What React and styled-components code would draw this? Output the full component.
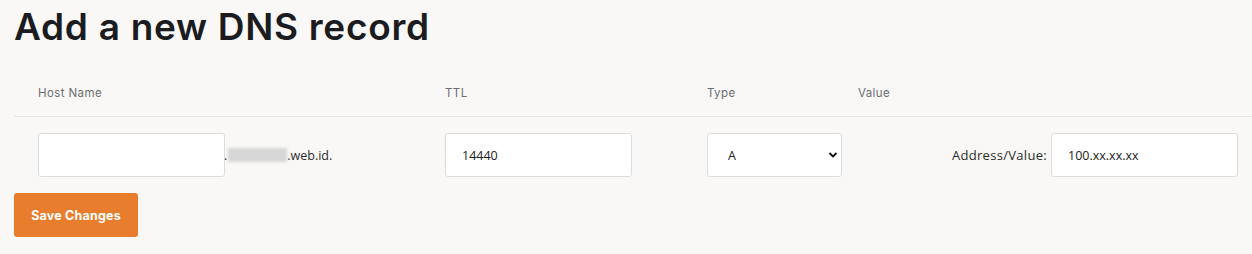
import React from 'react';
import styled, { createGlobalStyle } from 'styled-components';

const GlobalStyle = createGlobalStyle`
  html, body {
    margin: 0;
    padding: 0;
    background: #f9f8f6;
  }
  body {
    font-family: "Open Sans", "Liberation Sans", sans-serif;
    color: #212529;
  }
`;

const Page = styled.div`
  width: 1252px;
  height: 254px;
  box-sizing: border-box;
  padding: 0 0 0 14px;
  background: #f9f8f6;
  overflow: hidden;
`;

const Title = styled.h1`
  margin: 0;
  padding-top: 2px;
  height: 52px;
  font-family: Inter, "Liberation Sans", sans-serif;
  font-size: 37px;
  font-weight: 600;
  letter-spacing: 0.7px;
  line-height: 50px;
  color: #1b1c1f;
`;

const Grid = styled.div`
  display: grid;
  grid-template-columns: 407px 262px 151px 1fr;
  margin-top: 16px;
`;

const HeadCell = styled.div`
  height: 46px;
  display: flex;
  align-items: center;
  padding-left: 24px;
  font-family: Inter, "Liberation Sans", sans-serif;
  font-size: 11.5px;
  letter-spacing: 0.4px;
  color: #6c6e73;
  border-bottom: 1px solid #e3e5e8;
`;

const Cell = styled.div`
  display: flex;
  align-items: center;
  padding: 16px 0 16px 24px;
  font-size: 13px;
  color: #2b2b2b;
  justify-content: ${(p) => (p.$end ? 'flex-end' : 'flex-start')};
  padding-right: ${(p) => (p.$end ? '14px' : '0')};
`;

const Input = styled.input`
  box-sizing: border-box;
  flex-shrink: 0;
  width: 187px;
  height: 44px;
  padding: 0 16px;
  border: 1px solid #dcdcdc;
  border-radius: 3px;
  background: #fff;
  font-family: "Open Sans", "Liberation Sans", sans-serif;
  font-size: 12.5px;
  color: #222;
  outline: none;
`;

const Suffix = styled.span`
  display: flex;
  align-items: center;
  margin-left: -1px;
  font-size: 12.5px;
`;

const Blur = styled.span`
  display: inline-block;
  width: 59px;
  height: 14px;
  margin: 0 0 0 1px;
  background: #d6d6d6;
  filter: blur(1.5px);
`;

const SelectWrap = styled.div`
  position: relative;
  flex-shrink: 0;
  width: 135px;
  height: 44px;
`;

const Select = styled.select`
  appearance: none;
  box-sizing: border-box;
  width: 100%;
  height: 100%;
  padding: 0 0 0 20px;
  border: 1px solid #dcdcdc;
  border-radius: 3px;
  background: #fff;
  font-family: "Open Sans", "Liberation Sans", sans-serif;
  font-size: 12.5px;
  color: #222;
  outline: none;
`;

const Chevron = styled.svg`
  position: absolute;
  right: 4px;
  top: 18px;
  pointer-events: none;
`;

const ValueLabel = styled.span`
  margin-right: 4px;
  font-size: 13px;
  letter-spacing: 0.3px;
  color: #2b2b2b;
`;

const Button = styled.button`
  margin-top: 0;
  width: 124px;
  height: 44px;
  border: none;
  border-radius: 3px;
  background: #e97d2e;
  color: #fff;
  font-family: Inter, "Liberation Sans", sans-serif;
  font-size: 12.5px;
  font-weight: 700;
  letter-spacing: 0.2px;
  cursor: pointer;
`;

export default function App() {
  return (
    <Page>
      <GlobalStyle />
      <Title>Add a new DNS record</Title>
      <Grid>
        <HeadCell>Host Name</HeadCell>
        <HeadCell>TTL</HeadCell>
        <HeadCell>Type</HeadCell>
        <HeadCell>Value</HeadCell>

        <Cell>
          <Input type="text" defaultValue="" />
          <Suffix>
            .<Blur />.web.id.
          </Suffix>
        </Cell>
        <Cell>
          <Input type="text" defaultValue="14440" />
        </Cell>
        <Cell>
          <SelectWrap>
            <Select defaultValue="A">
              <option>A</option>
              <option>AAAA</option>
              <option>CNAME</option>
              <option>MX</option>
              <option>TXT</option>
            </Select>
            <Chevron width="10" height="8" viewBox="0 0 10 8">
              <path d="M1.5 2l3.5 3.5L8.5 2" fill="none" stroke="#111" strokeWidth="1.8" />
            </Chevron>
          </SelectWrap>
        </Cell>
        <Cell $end>
          <ValueLabel>Address/Value:</ValueLabel>
          <Input type="text" defaultValue="100.xx.xx.xx" />
        </Cell>
      </Grid>
      <Button>Save Changes</Button>
    </Page>
  );
}
